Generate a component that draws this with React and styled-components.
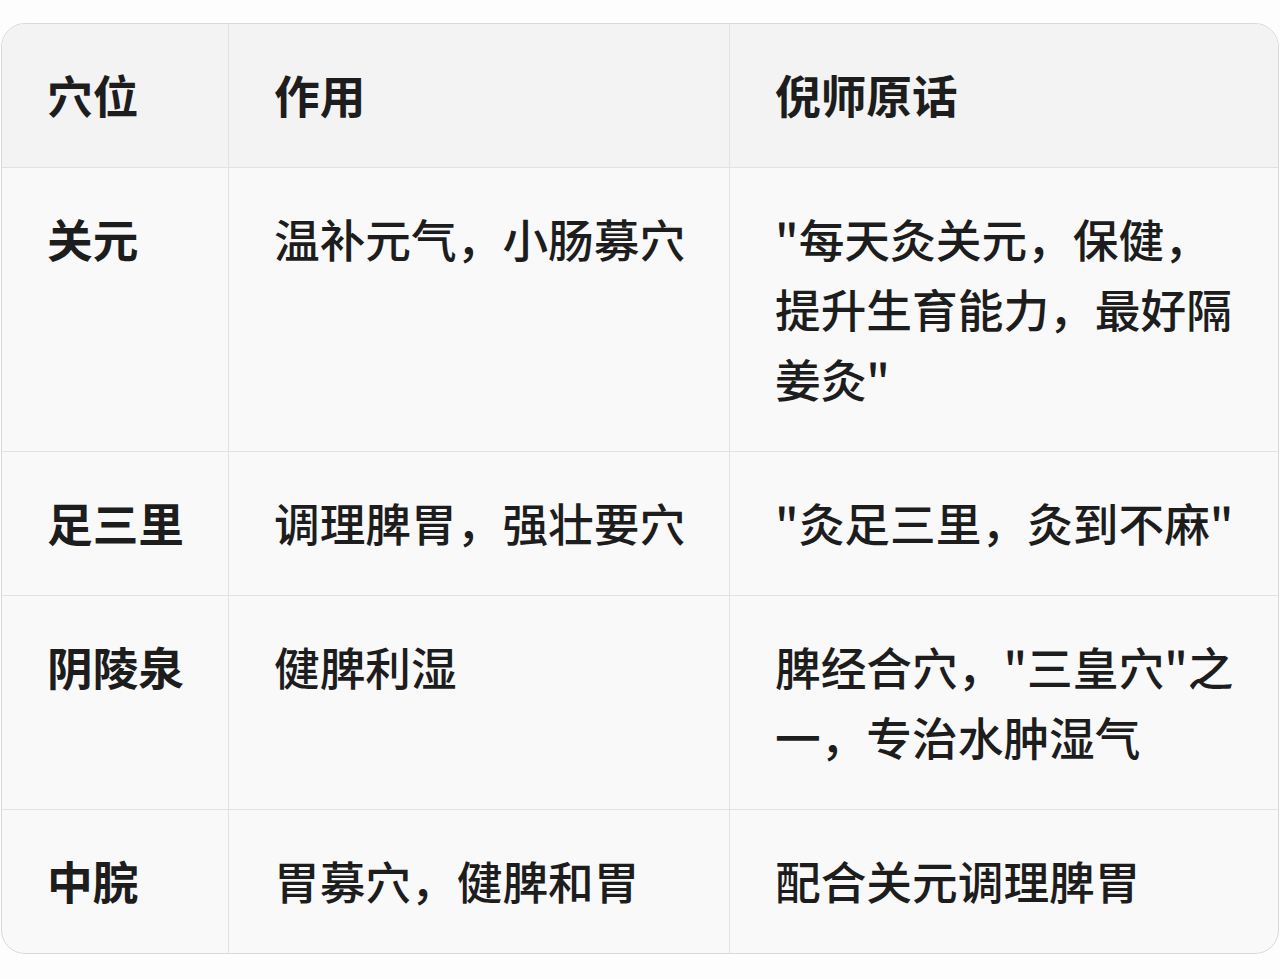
import React from 'react'
import styled, { createGlobalStyle } from 'styled-components'

const Global = createGlobalStyle`
  html, body {
    margin: 0;
    background: #fdfdfd;
  }
  body {
    font-family: "Noto Sans CJK SC", "Noto Sans", sans-serif;
    color: #1d1d1d;
  }
`

const Page = styled.div`
  padding: 23px 1px 0 1px;
`

const Table = styled.div`
  display: grid;
  grid-template-columns: 227px 501px 1fr;
  border: 1.5px solid #d9d9d9;
  border-radius: 24px;
  overflow: hidden;
  background: #f9f9f9;
`

const Cell = styled.div`
  padding: 35px ${p => (p.$last ? 36 : 28)}px 38px 45px;
  font-size: 45.7px;
  line-height: 70px;
  font-weight: ${p => (p.$head || p.$first ? 700 : 500)};
  background: ${p => (p.$head ? '#f3f3f3' : 'transparent')};
  border-right: ${p => (p.$last ? 'none' : '1px solid #e2e2e2')};
  border-bottom: ${p => (p.$bottom ? 'none' : '1.5px solid #e2e2e2')};
  word-break: break-all;
  line-break: strict;
`

const rows = [
  ['关元', '温补元气，小肠募穴', '"每天灸关元，保健，提升生育能力，最好隔姜灸"'],
  ['足三里', '调理脾胃，强壮要穴', '"灸足三里，灸到不麻"'],
  ['阴陵泉', '健脾利湿', '脾经合穴，"三皇穴"之一，专治水肿湿气'],
  ['中脘', '胃募穴，健脾和胃', '配合关元调理脾胃'],
]

const head = ['穴位', '作用', '倪师原话']

export default function App() {
  return (
    <>
      <Global />
      <Page>
        <Table>
          {head.map((h, i) => (
            <Cell key={h} $head $last={i === 2}>{h}</Cell>
          ))}
          {rows.map((r, ri) =>
            r.map((c, ci) => (
              <Cell
                key={ri + '-' + ci}
                $first={ci === 0}
                $last={ci === 2}
                $bottom={ri === rows.length - 1}
              >
                {c}
              </Cell>
            ))
          )}
        </Table>
      </Page>
    </>
  )
}
